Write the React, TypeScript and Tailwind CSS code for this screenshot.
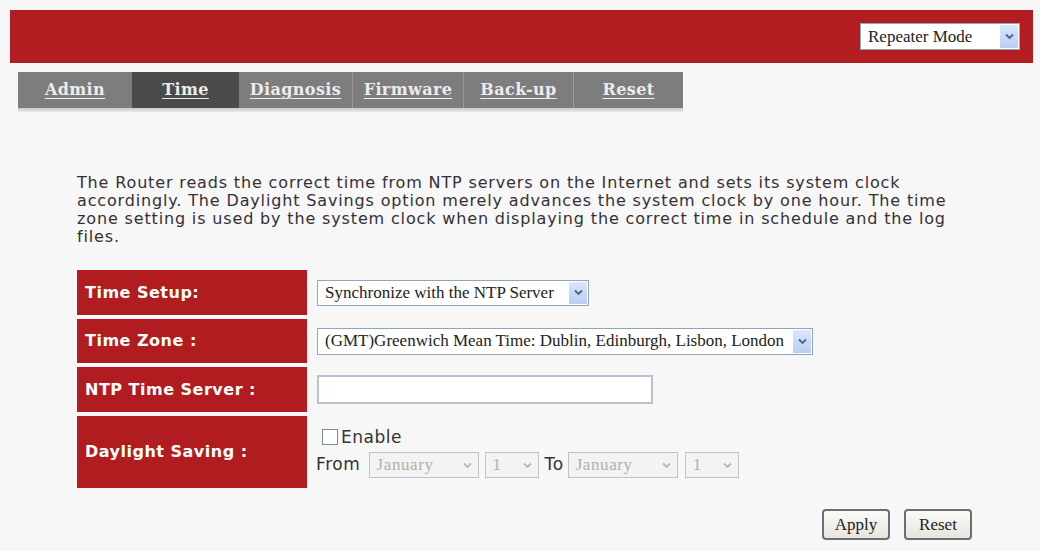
import React from "react";

const serif = { fontFamily: '"Liberation Serif", "DejaVu Serif", serif' };

function Chevron({ color = "#4d6185" }: { color?: string }) {
  return (
    <svg width="9" height="7" viewBox="0 0 9 7">
      <path d="M1 1.5 L4.5 5 L8 1.5" fill="none" stroke={color} strokeWidth="1.8" />
    </svg>
  );
}

function XPSelect({ text, w, h = 26, disabled = false }: { text: string; w: number; h?: number; disabled?: boolean }) {
  return (
    <div
      className={`flex items-stretch border ${disabled ? "border-[#b9c4cf] bg-[#f3f3f3]" : "border-[#8fa6bf] bg-white"} p-[1px]`}
      style={{ width: w, height: h }}
    >
      <div
        className={`flex-1 flex items-center pl-[6px] whitespace-nowrap overflow-hidden text-[17px] ${disabled ? "text-[#b0b0b0]" : "text-[#222]"}`}
        style={serif}
      >
        {text}
      </div>
      <div
        className={`w-[18px] flex items-center justify-center ${disabled ? "bg-[#f3f3f3]" : "bg-gradient-to-b from-[#dbe6fb] to-[#b9cdf3]"}`}
      >
        <Chevron color={disabled ? "#b8b8b8" : "#4d6185"} />
      </div>
    </div>
  );
}

function Label({ text, h }: { text: string; h: number }) {
  return (
    <div
      className="w-[230px] bg-[#b01c20] flex items-center pl-[8px] text-white font-bold text-[16px] tracking-[0.5px]"
      style={{ height: h, fontFamily: '"DejaVu Sans", Verdana, sans-serif' }}
    >
      {text}
    </div>
  );
}

const tabs = [
  { name: "Admin", w: 114 },
  { name: "Time", w: 107, active: true },
  { name: "Diagnosis", w: 113 },
  { name: "Firmware", w: 111 },
  { name: "Back-up", w: 110 },
  { name: "Reset", w: 110 },
];

export default function App() {
  return (
    <div
      className="w-[1040px] h-[551px] bg-[#f7f7f7] overflow-hidden"
      style={{ fontFamily: '"DejaVu Sans", Verdana, sans-serif' }}
    >
      {/* Header bar */}
      <div className="ml-[10px] mt-[10px] w-[1023px] h-[53px] bg-[#b11d21] flex items-center justify-end pr-[13px]">
        <XPSelect text="Repeater Mode" w={160} h={27} />
      </div>

      {/* Tabs */}
      <div className="ml-[18px] mt-[9px] w-[665px]">
        <div className="flex h-[36px]">
          {tabs.map((t, i) => (
            <div
              key={t.name}
              className={`flex items-center justify-center h-full ${t.active ? "bg-[#4b4b49]" : "bg-[#7d7d7d]"} ${i > 0 && !t.active && !tabs[i - 1].active ? "border-l border-[#9a9a9a]" : ""}`}
              style={{ width: t.w }}
            >
              <span
                className="text-[#ececec] font-bold text-[16px] tracking-[0.4px] underline underline-offset-[3px]"
                style={{ fontFamily: '"DejaVu Serif", Georgia, serif' }}
              >
                {t.name}
              </span>
            </div>
          ))}
        </div>
        <div className="h-[4px] bg-gradient-to-b from-[#c9c9c9] to-[#ececec]" />
      </div>

      {/* Description */}
      <p className="ml-[77px] mt-[62px] text-[16px] leading-[18px] text-[#353035] tracking-[0.85px]">
        The Router reads the correct time from NTP servers on the Internet and sets its system clock
        <br />
        accordingly. The Daylight Savings option merely advances the system clock by one hour. The time
        <br />
        zone setting is used by the system clock when displaying the correct time in schedule and the log
        <br />
        files.
      </p>

      {/* Form table */}
      <div className="ml-[77px] mt-[24px] flex flex-col gap-[4px]">
        <div className="flex items-center gap-[10px]">
          <Label text="Time Setup:" h={45} />
          <XPSelect text="Synchronize with the NTP Server" w={272} />
        </div>
        <div className="flex items-center gap-[10px]">
          <Label text="Time Zone :" h={44} />
          <XPSelect text="(GMT)Greenwich Mean Time: Dublin, Edinburgh, Lisbon, London" w={496} h={27} />
        </div>
        <div className="flex items-center gap-[10px]">
          <Label text="NTP Time Server :" h={45} />
          <div className="w-[336px] h-[29px] border-2 border-[#b7c3d0] bg-white" />
        </div>
        <div className="flex items-center gap-[9px]">
          <Label text="Daylight Saving :" h={72} />
          <div className="flex flex-col gap-[6px] mt-[2px]">
            <div className="flex items-center gap-[3px] pl-[6px] text-[17px] tracking-[0.5px] text-[#333] leading-[18px]">
              <div className="w-[16px] h-[16px] border border-[#7b8a99] bg-white" />
              <span>Enable</span>
            </div>
            <div className="flex items-center text-[17px] tracking-[0.6px] text-[#333]">
              <span className="mr-[8px]">From</span>
              <XPSelect text="January" w={110} disabled />
              <div className="w-[6px]" />
              <XPSelect text="1" w={54} disabled />
              <span className="ml-[6px] mr-[4px]">To</span>
              <XPSelect text="January" w={110} disabled />
              <div className="w-[7px]" />
              <XPSelect text="1" w={54} disabled />
            </div>
          </div>
        </div>
      </div>

      {/* Buttons */}
      <div className="flex justify-end gap-[14px] w-[972px] mt-[21px]">
        {["Apply", "Reset"].map((b) => (
          <div
            key={b}
            className="w-[68px] h-[31px] rounded-[4px] border-2 border-[#6b6f73] bg-gradient-to-b from-[#fbfbf8] to-[#e6e4dc] flex items-center justify-center text-[17px] text-[#222]"
            style={serif}
          >
            {b}
          </div>
        ))}
      </div>
    </div>
  );
}
